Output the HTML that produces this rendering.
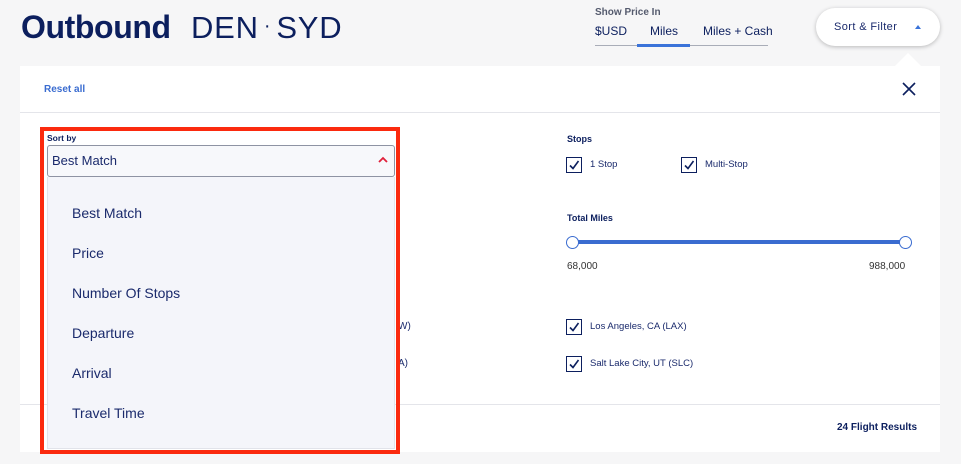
<!DOCTYPE html>
<html><head><meta charset="utf-8"><style>
*{margin:0;padding:0;box-sizing:border-box}
body{width:961px;height:464px;background:#f6f6f7;font-family:"Liberation Sans",sans-serif;color:#0c1f5e;position:relative;overflow:hidden}
.a{position:absolute;white-space:nowrap}
.cb{position:absolute;width:16px;height:16px;border:1.5px solid #0c1f5e;background:#fff}
.cb svg{position:absolute;left:1px;top:1px}
.item{position:absolute;left:72px;font-size:14px;color:#1a2a6c}
</style></head><body>
<div class="a" style="left:21px;top:9px;font-size:32px;font-weight:bold;color:#0c1f5e;letter-spacing:-0.4px">Outbound</div>
<div class="a" style="left:191px;top:10px;font-size:31px;color:#0c1f5e;letter-spacing:0.8px">DEN<span style="font-size:20px;position:relative;top:-6px;margin:0 5px">·</span>SYD</div>
<div class="a" style="left:595px;top:7px;font-size:10px;font-weight:bold;color:#555b6e">Show Price In</div>
<div class="a" style="left:595px;top:24px;font-size:12px;color:#0c1f5e">$USD</div>
<div class="a" style="left:650px;top:24px;font-size:12px;color:#0c1f5e">Miles</div>
<div class="a" style="left:703px;top:24px;font-size:12px;color:#0c1f5e">Miles + Cash</div>
<div class="a" style="left:595px;top:45px;width:173px;height:1px;background:#a9adb8"></div>
<div class="a" style="left:637px;top:44px;width:53px;height:3px;background:#3a73d9"></div>
<div class="a" style="left:816px;top:8px;width:124px;height:38px;background:#fff;border-radius:19px;box-shadow:0 1px 4px rgba(0,0,0,.25)"></div>
<div class="a" style="left:834px;top:21px;font-size:11px;color:#1a2a6c;letter-spacing:.4px">Sort &amp; Filter</div>
<div class="a" style="left:915px;top:25px;width:0;height:0;border-left:3px solid transparent;border-right:3px solid transparent;border-bottom:4px solid #3a73d9"></div>
<div class="a" style="left:895px;top:53px;width:0;height:0;border-left:13px solid transparent;border-right:13px solid transparent;border-bottom:13px solid #fff"></div>
<div class="a" style="left:20px;top:66px;width:920px;height:386px;background:#fff"></div>
<div class="a" style="left:44px;top:84px;font-size:10px;font-weight:bold;color:#3a6cd0">Reset all</div>
<svg class="a" style="left:902px;top:82px" width="14" height="14"><path d="M1 1L13 13M13 1L1 13" stroke="#0c1f5e" stroke-width="1.6"/></svg>
<div class="a" style="left:20px;top:112px;width:920px;height:1px;background:#e4e5ea"></div>
<div class="a" style="left:20px;top:404px;width:920px;height:1px;background:#e4e5ea"></div>
<div class="a" style="left:567px;top:134px;font-size:9px;font-weight:bold">Stops</div>
<div class="cb" style="left:566px;top:157px"><svg width="12" height="12"><path d="M2 6.5L5 9.5L10.5 2" stroke="#0c1f5e" stroke-width="1.6" fill="none"/></svg></div>
<div class="a" style="left:590px;top:159px;font-size:9.5px;color:#1a2a6c">1 Stop</div>
<div class="cb" style="left:681px;top:157px"><svg width="12" height="12"><path d="M2 6.5L5 9.5L10.5 2" stroke="#0c1f5e" stroke-width="1.6" fill="none"/></svg></div>
<div class="a" style="left:705px;top:159px;font-size:9.5px;color:#1a2a6c">Multi-Stop</div>
<div class="a" style="left:567px;top:213px;font-size:9px;font-weight:bold">Total Miles</div>
<div class="a" style="left:573px;top:240px;width:333px;height:4px;background:#3a6cd0"></div>
<div class="a" style="left:566px;top:236px;width:13px;height:13px;border-radius:50%;border:1.5px solid #3a6cd0;background:#fff"></div>
<div class="a" style="left:899px;top:236px;width:13px;height:13px;border-radius:50%;border:1.5px solid #3a6cd0;background:#fff"></div>
<div class="a" style="left:567px;top:261px;font-size:10px;color:#333">68,000</div>
<div class="a" style="left:869px;top:261px;font-size:10px;color:#333">988,000</div>
<div class="cb" style="left:566px;top:319px"><svg width="12" height="12"><path d="M2 6.5L5 9.5L10.5 2" stroke="#0c1f5e" stroke-width="1.6" fill="none"/></svg></div>
<div class="a" style="left:590px;top:321px;font-size:9.5px;color:#1a2a6c">Los Angeles, CA (LAX)</div>
<div class="cb" style="left:566px;top:356px"><svg width="12" height="12"><path d="M2 6.5L5 9.5L10.5 2" stroke="#0c1f5e" stroke-width="1.6" fill="none"/></svg></div>
<div class="a" style="left:590px;top:358px;font-size:9.5px;color:#1a2a6c">Salt Lake City, UT (SLC)</div>
<div class="a" style="left:398px;top:321px;font-size:10px;color:#1a2a6c">W)</div>
<div class="a" style="left:398px;top:358px;font-size:10px;color:#1a2a6c">A)</div>
<div class="a" style="left:837px;top:422px;font-size:10px;font-weight:bold">24 Flight Results</div>
<div class="a" style="left:40px;top:127px;width:360px;height:327px;border:4px solid #fb2a0e"></div>
<div class="a" style="left:47px;top:133px;font-size:8.5px;font-weight:bold">Sort by</div>
<div class="a" style="left:47px;top:145px;width:348px;height:32px;background:#f7f8fb;border:1px solid #8e93a3;border-radius:3px"></div>
<div class="a" style="left:52px;top:153px;font-size:13px;color:#1a2a6c">Best Match</div>
<svg class="a" style="left:378px;top:156px" width="10" height="7"><path d="M1 6L5 2L9 6" stroke="#e0203a" stroke-width="1.8" fill="none"/></svg>
<div class="a" style="left:47px;top:177px;width:348px;height:272px;background:#f4f5fa;border:1px solid #e1e3ea;border-top:none"></div>
<div class="item" style="top:205px">Best Match</div>
<div class="item" style="top:245px">Price</div>
<div class="item" style="top:285px">Number Of Stops</div>
<div class="item" style="top:325px">Departure</div>
<div class="item" style="top:365px">Arrival</div>
<div class="item" style="top:405px">Travel Time</div>
</body></html>
